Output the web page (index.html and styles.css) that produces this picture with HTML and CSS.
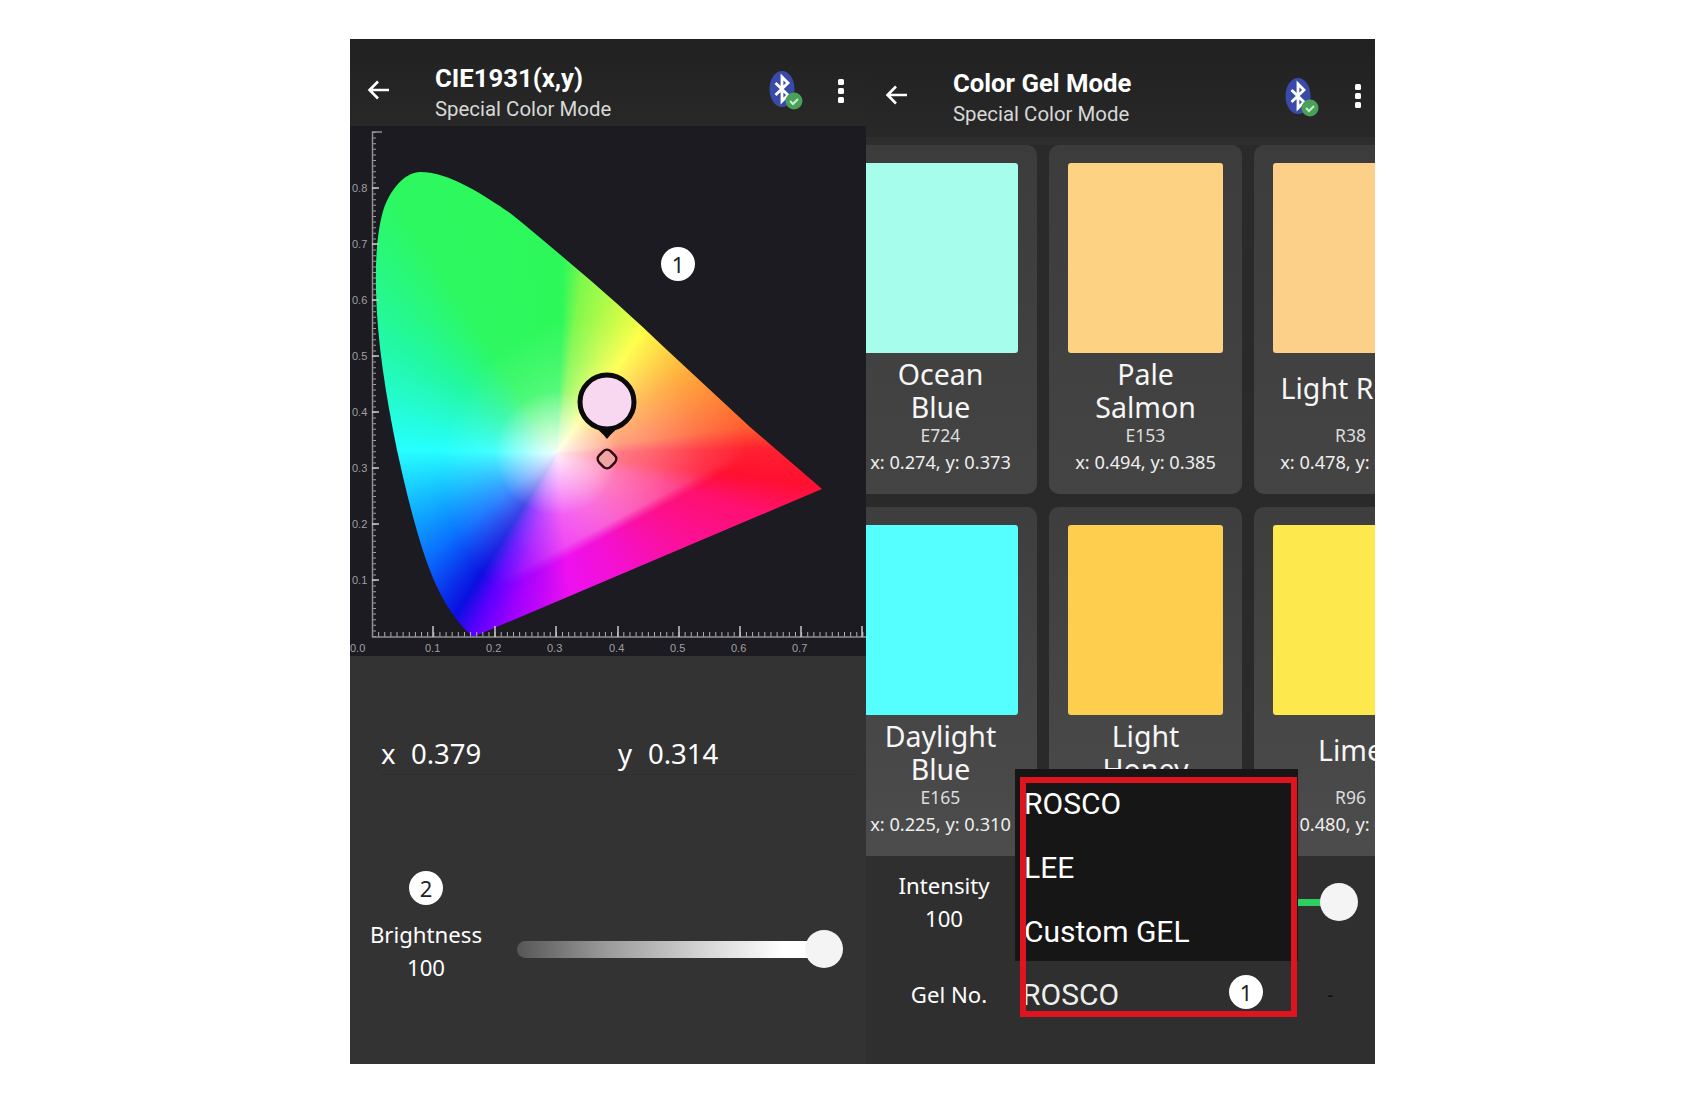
FILE: index.html
```html
<!DOCTYPE html>
<html lang="en">
<head>
    <meta charset="UTF-8">
    <title>CIE1931 and Color Gel Mode</title>
    <link rel="stylesheet" href="styles.css">
</head>
<body>

    <svg class="defs" width="0" height="0">
        <symbol id="back" viewBox="0 0 24 24">
            <path d="M22 12H3M11 3.5 2.5 12l8.5 8.5" fill="none" stroke="#fff" stroke-width="2.6"/>
        </symbol>
        <symbol id="bt" viewBox="0 0 44 48">
            <ellipse cx="18" cy="21" rx="12.5" ry="18" fill="#3a4aa8"/>
            <path d="M11.500 15 24 27 18 33V9l6 6-12.500 12" fill="none" stroke="#fff" stroke-width="2.800"/>
            <circle cx="30" cy="33" r="8.500" fill="#4aa05a"/>
            <path d="M26 33l3 3 5-5" fill="none" stroke="#c8f0c8" stroke-width="2"/>
        </symbol>
        <symbol id="more" viewBox="0 0 8 28">
            <rect x="1" y="3" width="6" height="6" rx="1.5" fill="#fff"/>
            <rect x="1" y="12" width="6" height="6" rx="1.5" fill="#fff"/>
            <rect x="1" y="21" width="6" height="6" rx="1.5" fill="#fff"/>
        </symbol>
    </svg>

    <div class="shot">

        <section class="panel panel-cie">
            <header class="appbar">
                <svg class="icon-back"><use href="#back"/></svg>
                <div class="appbar-text">
                    <div class="appbar-title">CIE1931(x,y)</div>
                    <div class="appbar-sub">Special Color Mode</div>
                </div>
                <svg class="icon-bt"><use href="#bt"/></svg>
                <svg class="icon-more"><use href="#more"/></svg>
            </header>

            <div class="chart">
                <div class="gamut"></div>
                <svg class="axes" width="516" height="530">
                    <line class="minor-y" x1="24" y1="6" x2="24" y2="511"/>
                    <line class="minor-x" x1="22" y1="508.500" x2="516" y2="508.500"/>
                    <path class="axis" d="M32 6H22.500V511H516"/>
                    <path class="major" d="M22 62h7M22 118h7M22 174h7M22 230h7M22 286h7M22 342h7M22 398h7M22 454h7M83 511v-11M145 511v-11M206 511v-11M268 511v-11M329 511v-11M390 511v-11M451 511v-11M512 511v-11"/>
                    <text x="2" y="66">0.8</text>
                    <text x="2" y="122">0.7</text>
                    <text x="2" y="178">0.6</text>
                    <text x="2" y="234">0.5</text>
                    <text x="2" y="290">0.4</text>
                    <text x="2" y="346">0.3</text>
                    <text x="2" y="402">0.2</text>
                    <text x="2" y="458">0.1</text>
                    <text x="0" y="526">0.0</text>
                    <text x="75" y="526">0.1</text>
                    <text x="136" y="526">0.2</text>
                    <text x="197" y="526">0.3</text>
                    <text x="259" y="526">0.4</text>
                    <text x="320" y="526">0.5</text>
                    <text x="381" y="526">0.6</text>
                    <text x="442" y="526">0.7</text>
                    <path class="pin-tip" d="M238 296Q250 304 257 313Q264 304 276 296Z"/>
                    <circle class="pin-face" cx="257" cy="276" r="27"/>
                    <rect class="target" x="249" y="325" width="16" height="16" rx="5" transform="rotate(45 257 333)"/>
                </svg>
                <span class="badge badge-chart">1</span>
            </div>

            <div class="controls-cie">
                <div class="coords">
                    <div class="coord"><span class="coord-key">x</span><span>0.379</span></div>
                    <div class="coord"><span class="coord-key">y</span><span>0.314</span></div>
                </div>
                <div class="bright-row">
                    <div class="bright-label">
                        <span class="badge">2</span>
                        <div class="ctl-text">Brightness</div>
                        <div class="ctl-text">100</div>
                    </div>
                    <div class="slider">
                        <div class="track track-grey"></div>
                        <div class="thumb"></div>
                    </div>
                </div>
            </div>
        </section>

        <section class="panel panel-gel">
            <header class="appbar appbar-gel">
                <svg class="icon-back"><use href="#back"/></svg>
                <div class="appbar-text">
                    <div class="appbar-title">Color Gel Mode</div>
                    <div class="appbar-sub">Special Color Mode</div>
                </div>
                <svg class="icon-bt"><use href="#bt"/></svg>
                <svg class="icon-more"><use href="#more"/></svg>
            </header>

            <div class="gel-grid">
                <div class="gel-card">
                    <div class="swatch ocean"></div>
                    <div class="gel-name">Ocean<br>Blue</div>
                    <div class="gel-code">E724</div>
                    <div class="gel-xy">x: 0.274, y: 0.373</div>
                </div>
                <div class="gel-card">
                    <div class="swatch salmon"></div>
                    <div class="gel-name">Pale<br>Salmon</div>
                    <div class="gel-code">E153</div>
                    <div class="gel-xy">x: 0.494, y: 0.385</div>
                </div>
                <div class="gel-card">
                    <div class="swatch rose"></div>
                    <div class="gel-name gel-name-single">Light Rose</div>
                    <div class="gel-code">R38</div>
                    <div class="gel-xy">x: 0.478, y: 0.369</div>
                </div>
                <div class="gel-card">
                    <div class="swatch daylight"></div>
                    <div class="gel-name">Daylight<br>Blue</div>
                    <div class="gel-code">E165</div>
                    <div class="gel-xy">x: 0.225, y: 0.310</div>
                </div>
                <div class="gel-card">
                    <div class="swatch honey"></div>
                    <div class="gel-name">Light<br>Honey</div>
                    <div class="gel-code">R05</div>
                    <div class="gel-xy">x: 0.500, y: 0.400</div>
                </div>
                <div class="gel-card">
                    <div class="swatch lime"></div>
                    <div class="gel-name gel-name-single">Lime</div>
                    <div class="gel-code">R96</div>
                    <div class="gel-xy">x: 0.480, y: 0.480</div>
                </div>
            </div>

            <div class="controls-gel">
                <div class="gel-row">
                    <div class="gel-label">
                        <div class="ctl-text">Intensity</div>
                        <div class="ctl-text">100</div>
                    </div>
                    <div class="slider">
                        <div class="track track-green"></div>
                        <div class="thumb"></div>
                    </div>
                </div>
                <div class="gel-row gel-row-no">
                    <div class="gel-label gel-label-no">
                        <div class="ctl-text">Gel No.</div>
                    </div>
                    <div class="gel-brand">ROSCO</div>
                    <span class="gel-dash">-</span>
                </div>
            </div>

            <ul class="dropdown">
                <li>ROSCO</li>
                <li>LEE</li>
                <li>Custom GEL</li>
            </ul>
            <div class="callout"></div>
            <span class="badge badge-gel">1</span>
        </section>

    </div>

</body>
</html>
```

FILE: styles.css
```css
* {
    box-sizing: border-box;
}

body {
    margin: 0;
    background-color: #fff;
    font-family: 'Noto Sans', sans-serif;
    color: #fff;
}

.defs {
    position: absolute;
}

.shot {
    display: flex;
    width: 1025px;
    height: 1025px;
    margin: 39px 0 0 350px;
    background-color: #333;
}

.panel {
    position: relative;
    display: flex;
    flex-direction: column;
    overflow: hidden;
}

.panel-cie {
    width: 516px;
    background-color: #333;
}

.panel-gel {
    width: 509px;
    background-color: #2e2e2e;
}

/* top bar */
.appbar {
    display: flex;
    flex: none;
    height: 87px;
    padding: 24px 0 0 17px;
    background: linear-gradient(#212121, #282828);
}

.appbar-gel {
    height: 98px;
    padding-top: 29px;
    padding-left: 19px;
}

.icon-back {
    flex: none;
    width: 24px;
    height: 24px;
    margin: 15px 44px 0 0;
}

.appbar-gel .icon-back {
    margin-right: 44px;
}

.appbar-text {
    flex: 1;
    font-family: Roboto, sans-serif;
}

.appbar-title {
    font-size: 25.700px;
    font-weight: 700;
    line-height: 30px;
}

.appbar-sub {
    margin-top: 1px;
    font-size: 20.400px;
    line-height: 30px;
    color: #d8d8d8;
}

.icon-bt {
    flex: none;
    width: 44px;
    height: 48px;
    margin: 5px 29px 0 0;
}

.icon-more {
    flex: none;
    width: 8px;
    height: 28px;
    margin: 13px 21px 0 0;
}

.appbar-gel .icon-bt {
    margin: 7px 30px 0 0;
}

.appbar-gel .icon-more {
    margin-right: 13px;
}

/* CIE chart */
.chart {
    position: relative;
    flex: none;
    height: 530px;
    background-color: #1c1b21;
}

.gamut {
    position: absolute;
    inset: 0;
    clip-path: path("M70 46C57 46 42 60 34 82C28 100 25 130 26 165C27 215 36 270 47 324C56 365 70 425 87 461C97 482 110 500 123 511L472 363L400 301L317 224C285 193 250 162 213 131C195 116 178 101 160 87C135 70 100 46 70 46Z");
    background: conic-gradient(from 0deg at 207px 327px, #2df85a 0deg, #2ef85a 2deg, #80f84c 8deg, #ffff44 35deg, #ffa530 59deg, #ff6030 82deg, #ff2030 89deg, #ff1030 97deg, #ff1070 106deg, #f510d0 151deg, #ee10f0 175deg, #a000ff 195deg, #5a00ff 205deg, #0a10e0 212deg, #0a70ff 231deg, #10a8ff 246deg, #26ffff 271deg, #22f8a0 305deg, #2df860 328deg, #2df85a 360deg);
}

/* the white wash stops along a line, below it the colours stay full */
.gamut::after {
    content: "";
    position: absolute;
    inset: 0;
    background:
        radial-gradient(circle at 207px 327px, rgba(255, 255, 255, .9) 0, rgba(255, 255, 255, .45) 30px, transparent 62px),
        radial-gradient(circle at 245px 345px, rgba(255, 255, 255, .5) 0, rgba(255, 255, 255, .33) 55px, rgba(255, 255, 255, .12) 110px, transparent 155px);
    -webkit-mask-image: linear-gradient(152deg, #000 66.500%, transparent 68%);
    mask-image: linear-gradient(152deg, #000 66.500%, transparent 68%);
}

.axes {
    position: absolute;
    top: 0;
    left: 0;
}

.axes text {
    font-family: 'Liberation Sans', sans-serif;
    font-size: 11px;
    fill: #a0a0a0;
}

.axis {
    fill: none;
    stroke: #8f8f8f;
    stroke-width: 1.500;
}

.major {
    fill: none;
    stroke: #c8c8c8;
    stroke-width: 1.500;
}

.minor-x {
    stroke: #b0b0b0;
    stroke-width: 5;
    stroke-dasharray: 1 5.130;
}

.minor-y {
    stroke: #a0a0a0;
    stroke-width: 4;
    stroke-dasharray: 1 4.600;
}

.pin-tip {
    fill: #0a0a0a;
}

.pin-face {
    fill: #f8d8f0;
    stroke: #0a0a0a;
    stroke-width: 5;
}

.target {
    fill: #f0a4a4;
    stroke: #300a14;
    stroke-width: 2.500;
}

/* numbered markers */
.badge {
    display: flex;
    align-items: center;
    justify-content: center;
    width: 34px;
    height: 34px;
    border-radius: 50%;
    background-color: #fff;
    color: #222;
    font-family: 'Noto Sans', sans-serif;
    font-size: 22px;
}

.badge-chart {
    position: absolute;
    top: 121px;
    left: 311px;
}

.badge-gel {
    position: absolute;
    top: 936px;
    left: 363px;
}

/* left controls */
.controls-cie {
    flex: 1;
}

.coords {
    display: flex;
    height: 120px;
    padding: 78px 0 0 31px;
}

.coord {
    display: flex;
    width: 237px;
    height: 41px;
    font-size: 27.500px;
    line-height: 40px;
    border-bottom: 1px solid #2e2e2e;
}

.coord-key {
    width: 30px;
}

.bright-row {
    display: flex;
    align-items: flex-end;
    margin-top: 95px;
}

.bright-label {
    display: flex;
    flex: none;
    flex-direction: column;
    align-items: center;
    width: 152px;
}

.bright-label .badge {
    margin-bottom: 13px;
}

.ctl-text {
    font-size: 22.200px;
    line-height: 33px;
    text-align: center;
    color: #fff;
}

.bright-row .slider {
    flex: none;
    width: 326px;
    margin: 0 0 16px 15px;
}

.slider {
    position: relative;
    display: flex;
    align-items: center;
    height: 38px;
}

.track {
    flex: 1;
    margin-right: -8px;
    border-radius: 9px 0 0 9px;
}

.track-grey {
    height: 17px;
    background: linear-gradient(90deg, #565656, #9a9a9a 30%, #d8d8d8 65%, #fff 90%);
}

.track-green {
    height: 7px;
    background-color: #2dd060;
}

.thumb {
    position: relative;
    flex: none;
    width: 38px;
    height: 38px;
    border-radius: 50%;
    background-color: #f4f4f4;
}

/* gel cards */
.gel-grid {
    display: grid;
    flex: none;
    grid-template-columns: repeat(3, 193px);
    grid-auto-rows: 349px;
    gap: 13px 12px;
    margin: 8px 0 0 -22px;
    width: 700px;
    height: 711px;
    background-color: #2a2a2a;
}

.gel-card {
    padding: 18px 19px 0;
    border-radius: 10px;
    background: linear-gradient(#3c3c3c, #444);
    text-align: center;
}

.gel-card:nth-child(n+4) {
    border-radius: 10px 10px 0 0;
    background: linear-gradient(#3e3e3e, #4c4c4c);
}

.swatch {
    height: 190px;
    border-radius: 3px;
}

.ocean { background-color: #a6fdeb; }
.salmon { background-color: #fed283; }
.rose { background-color: #fdd08a; }
.daylight { background-color: #55feff; }
.honey { background-color: #fecf4e; }
.lime { background-color: #fde84e; }

.gel-name {
    display: flex;
    align-items: center;
    justify-content: center;
    height: 66px;
    margin: 5px -15px 0;
    font-size: 28.500px;
    line-height: 33px;
    text-align: center;
    white-space: nowrap;
    color: #f6f6f6;
}

.gel-name-single {
    padding-bottom: 6px;
}

.gel-code {
    margin-top: -1px;
    font-size: 17.500px;
    line-height: 24px;
    color: #ddd;
}

.gel-xy {
    margin: 3px -19px 0;
    font-size: 18.200px;
    line-height: 24px;
    white-space: nowrap;
    color: #eee;
}

/* right controls */
.controls-gel {
    flex: 1;
    background-color: #2f2f2f;
}

.gel-row {
    display: flex;
    padding-top: 13px;
}

.gel-label {
    flex: none;
    width: 156px;
}

.gel-row .slider {
    flex: 1;
    height: 38px;
    margin: 14px 17px 0 0;
}

.gel-row-no {
    align-items: center;
    padding-top: 43px;
}

.gel-label-no {
    padding-left: 10px;
}

.gel-brand {
    flex: none;
    width: 305px;
    font-family: Roboto, sans-serif;
    font-size: 30px;
    line-height: 33px;
    color: #eee;
}

.gel-dash {
    color: #111;
    font-size: 20px;
    line-height: 20px;
}

/* dropdown and red callout, both lie over the controls */
.dropdown {
    position: absolute;
    top: 730px;
    left: 149px;
    width: 283px;
    height: 192px;
    margin: 0;
    padding: 2px 0 0 9px;
    list-style: none;
    background-color: #161616;
    font-family: Roboto, sans-serif;
    font-size: 30px;
}

.dropdown li {
    height: 64px;
    padding-top: 1px;
    line-height: 64px;
}

.callout {
    position: absolute;
    top: 738px;
    left: 154px;
    width: 277px;
    height: 240px;
    border: 6px solid #e0141f;
}
```
